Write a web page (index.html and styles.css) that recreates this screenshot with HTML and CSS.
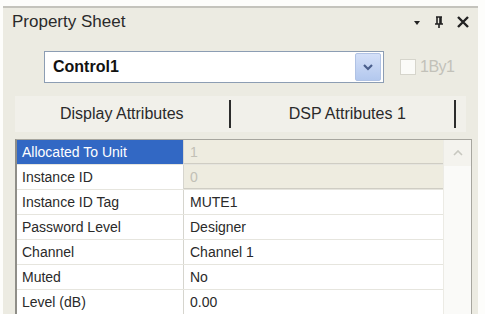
FILE: index.html
```html
<!DOCTYPE html>
<html lang="en">
<head>
    <meta charset="UTF-8">
    <title>Property Sheet</title>
    <link rel="stylesheet" href="styles.css">
</head>
<body>
    <div class="panel">
        <div class="title-bar">
            <span class="title">Property Sheet</span>
            <div class="title-icons">
                <svg width="10" height="10" viewBox="0 0 10 10"><path d="M2 4h6l-3 4z" fill="#222"/></svg>
                <svg width="12" height="14" viewBox="0 0 12 14"><path d="M3 2h6M4 2v7M8 2v7M7 2v7M2 9h8M6 9v4" stroke="#222" stroke-width="1.6" fill="none"/></svg>
                <svg width="14" height="14" viewBox="0 0 14 14"><path d="M2 2l10 10M12 2L2 12" stroke="#222" stroke-width="2.4"/></svg>
            </div>
        </div>

        <div class="combo-row">
            <div class="combo">
                <span class="combo-text">Control1</span>
                <div class="combo-btn">
                    <svg width="12" height="8" viewBox="0 0 12 8"><path d="M2 2l4 4 4-4" stroke="#4a5f8c" stroke-width="2.2" fill="none"/></svg>
                </div>
            </div>
            <div class="check"></div>
            <span class="check-label">1By1</span>
        </div>

        <div class="tabs">
            <div class="tab">Display Attributes</div>
            <div class="tab-sep"></div>
            <div class="tab">DSP Attributes 1</div>
            <div class="tab-sep"></div>
        </div>

        <div class="grid">
            <div class="rows">
                <div class="row readonly">
                    <div class="name selected">Allocated To Unit</div>
                    <div class="value">1</div>
                </div>
                <div class="row readonly">
                    <div class="name">Instance ID</div>
                    <div class="value">0</div>
                </div>
                <div class="row">
                    <div class="name">Instance ID Tag</div>
                    <div class="value">MUTE1</div>
                </div>
                <div class="row">
                    <div class="name">Password Level</div>
                    <div class="value">Designer</div>
                </div>
                <div class="row">
                    <div class="name">Channel</div>
                    <div class="value">Channel 1</div>
                </div>
                <div class="row">
                    <div class="name">Muted</div>
                    <div class="value">No</div>
                </div>
                <div class="row">
                    <div class="name">Level (dB)</div>
                    <div class="value">0.00</div>
                </div>
            </div>
            <div class="scrollbar">
                <div class="scroll-up">
                    <svg width="10" height="6" viewBox="0 0 10 6"><path d="M1 5l4-4 4 4" stroke="#c8c8c0" stroke-width="1.6" fill="none"/></svg>
                </div>
            </div>
        </div>
    </div>
</body>
</html>
```

FILE: styles.css
```css
html, body { margin: 0; height: 100%; overflow: hidden; }
body { background: #fdfdfb; font-family: "Liberation Sans", Arial, sans-serif; color: #1e1e1e; }
.panel { margin: 6px 7px 0 3px; height: 320px; background: #ecebe2; border-top: 2px solid #c4c3bc; }

.title-bar { height: 28px; display: flex; align-items: center; justify-content: space-between; padding: 0 8px 0 9px; }
.title { font-size: 17px; color: #2a2a2a; }
.title-icons { display: flex; align-items: center; gap: 11px; }

.combo-row { display: flex; align-items: center; margin: 14px 0 0 41px; height: 34px; }
.combo { width: 338px; height: 30px; border: 1px solid #8c9db3; background: #fff; display: flex; align-items: center; justify-content: space-between; }
.combo-text { font-weight: bold; font-size: 16px; padding-left: 8px; color: #111; }
.combo-btn { width: 24px; height: 26px; margin-right: 2px; background: linear-gradient(#d4e0f8, #b3c8ee); border: 1px solid #b0c2e4; border-radius: 2px; display: flex; align-items: center; justify-content: center; }
.check { width: 14px; height: 14px; margin-left: 16px; background: #fbfbf8; border: 1px solid #d6d5cc; }
.check-label { margin-left: 4px; font-size: 16px; letter-spacing: -0.5px; color: #c2c1b9; }

.tabs { display: flex; align-items: center; margin: 12px 12px 0 12px; height: 36px; background: #f1f0ea; }
.tab { flex: 1; text-align: center; font-size: 16px; color: #2a2a2a; }
.tab-sep { width: 2px; height: 28px; background: #2c2c2c; margin-right: 10px; }

.grid { display: flex; margin: 7px 6px 0 12px; border: 1px solid #a7a69f; border-left: 2px solid #8f8e88; background: #fff; }
.rows { flex: 1; }
.row { display: flex; height: 24px; border-bottom: 1px solid #e6e5de; font-size: 14px; }
.name { width: 161px; padding-left: 5px; line-height: 24px; border-right: 1px solid #d6d5ce; color: #2a2a2a; }
.value { flex: 1; padding-left: 6px; line-height: 24px; color: #2a2a2a; }
.selected { background: #3268c4; color: #fff; }
.readonly .value { background: #eeece0; color: #c2c0b6; border-bottom: 1px solid #cfcdc4; }
.scrollbar { width: 27px; background: #fafaf8; border-left: 1px solid #ecebe5; }
.scroll-up { height: 26px; display: flex; align-items: center; justify-content: center; background: #f4f3ee; }
```
